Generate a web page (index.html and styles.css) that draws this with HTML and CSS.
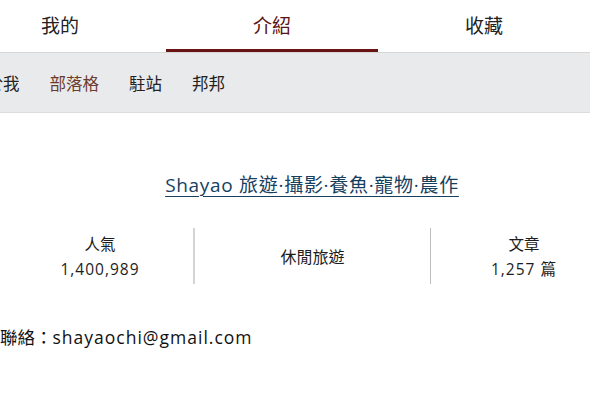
FILE: index.html
```html
<!DOCTYPE html>
<html lang="zh-Hant">
<head>
    <meta charset="UTF-8">
    <meta name="viewport" content="width=device-width, initial-scale=1.0">
    <title>Shayao 介紹</title>
    <link rel="stylesheet" href="styles.css">
</head>
<body>

    <div class="page">
        <div class="tabs">
            <a class="tab">我的</a>
            <a class="tab active">介紹</a>
            <a class="tab">收藏</a>
        </div>
        <div class="subnav">
            <a>關於我</a>
            <a class="current">部落格</a>
            <a>駐站</a>
            <a>邦邦</a>
        </div>

        <div class="intro">
            <h1 class="blog-title"><a>Shayao 旅遊·攝影·養魚·寵物·農作</a></h1>
            <div class="stats">
                <div class="stat">
                    <span>人氣</span>
                    <span class="num">1,400,989</span>
                </div>
                <div class="stat middle">
                    <span>休閒旅遊</span>
                </div>
                <div class="stat">
                    <span>文章</span>
                    <span class="num">1,257 篇</span>
                </div>
            </div>
            <p class="contact">聯絡：<span class="mail">shayaochi@gmail.com</span></p>
        </div>
    </div>

</body>
</html>
```

FILE: styles.css
```css
body {
    margin: 0;
    padding: 0;
    overflow: hidden;
    background: #ffffff;
    color: #1d1d1d;
    font-family: "Open Sans", "Noto Sans CJK TC", sans-serif;
}

.page {
    width: 636px;
    margin-left: -46px;
}

.tabs {
    display: grid;
    grid-template-columns: repeat(3, 212px);
    height: 52px;
    border-bottom: 1px solid #d6d6d6;
}
.tab {
    display: flex;
    justify-content: center;
    align-items: center;
    font-size: 19px;
    color: #222;
    padding-bottom: 2px;
    box-sizing: border-box;
}
.tab.active {
    color: #5a1414;
    border-bottom: 3px solid #6a1515;
    padding-bottom: 0;
}

.subnav {
    display: flex;
    gap: 30px;
    align-items: center;
    height: 59px;
    padding-left: 16px;
    background: #e9eaeb;
    border-bottom: 1px solid #dcdcdc;
    font-size: 16.5px;
}
.subnav a {
    color: #222;
}
.subnav .current {
    color: #6b3b2b;
}

.intro {
    padding-top: 57px;
}
.blog-title {
    margin: 0;
    text-align: center;
    font-size: 19px;
    font-weight: normal;
    letter-spacing: 0.7px;
    padding-left: 80px;
}
.blog-title a {
    color: #17405f;
    text-decoration: underline;
    text-underline-offset: 4px;
    text-decoration-thickness: 1px;
}

.stats {
    display: grid;
    grid-template-columns: 186px 238px 186px;
    margin: 30px 0 0 53px;
}
.stat {
    display: flex;
    flex-direction: column;
    justify-content: center;
    align-items: center;
    height: 56px;
    font-size: 15.5px;
    line-height: 25px;
    padding-top: 2px;
    box-sizing: border-box;
}
.stat .num {
    letter-spacing: 1px;
}
.stat.middle {
    border-left: 2px solid #d4d4d4;
    border-right: 1px solid #bdbdbd;
    font-size: 16px;
}

.contact {
    margin: 40px 0 0 46px;
    font-size: 17.5px;
    color: #111;
}
.contact .mail {
    letter-spacing: 1px;
}
```
